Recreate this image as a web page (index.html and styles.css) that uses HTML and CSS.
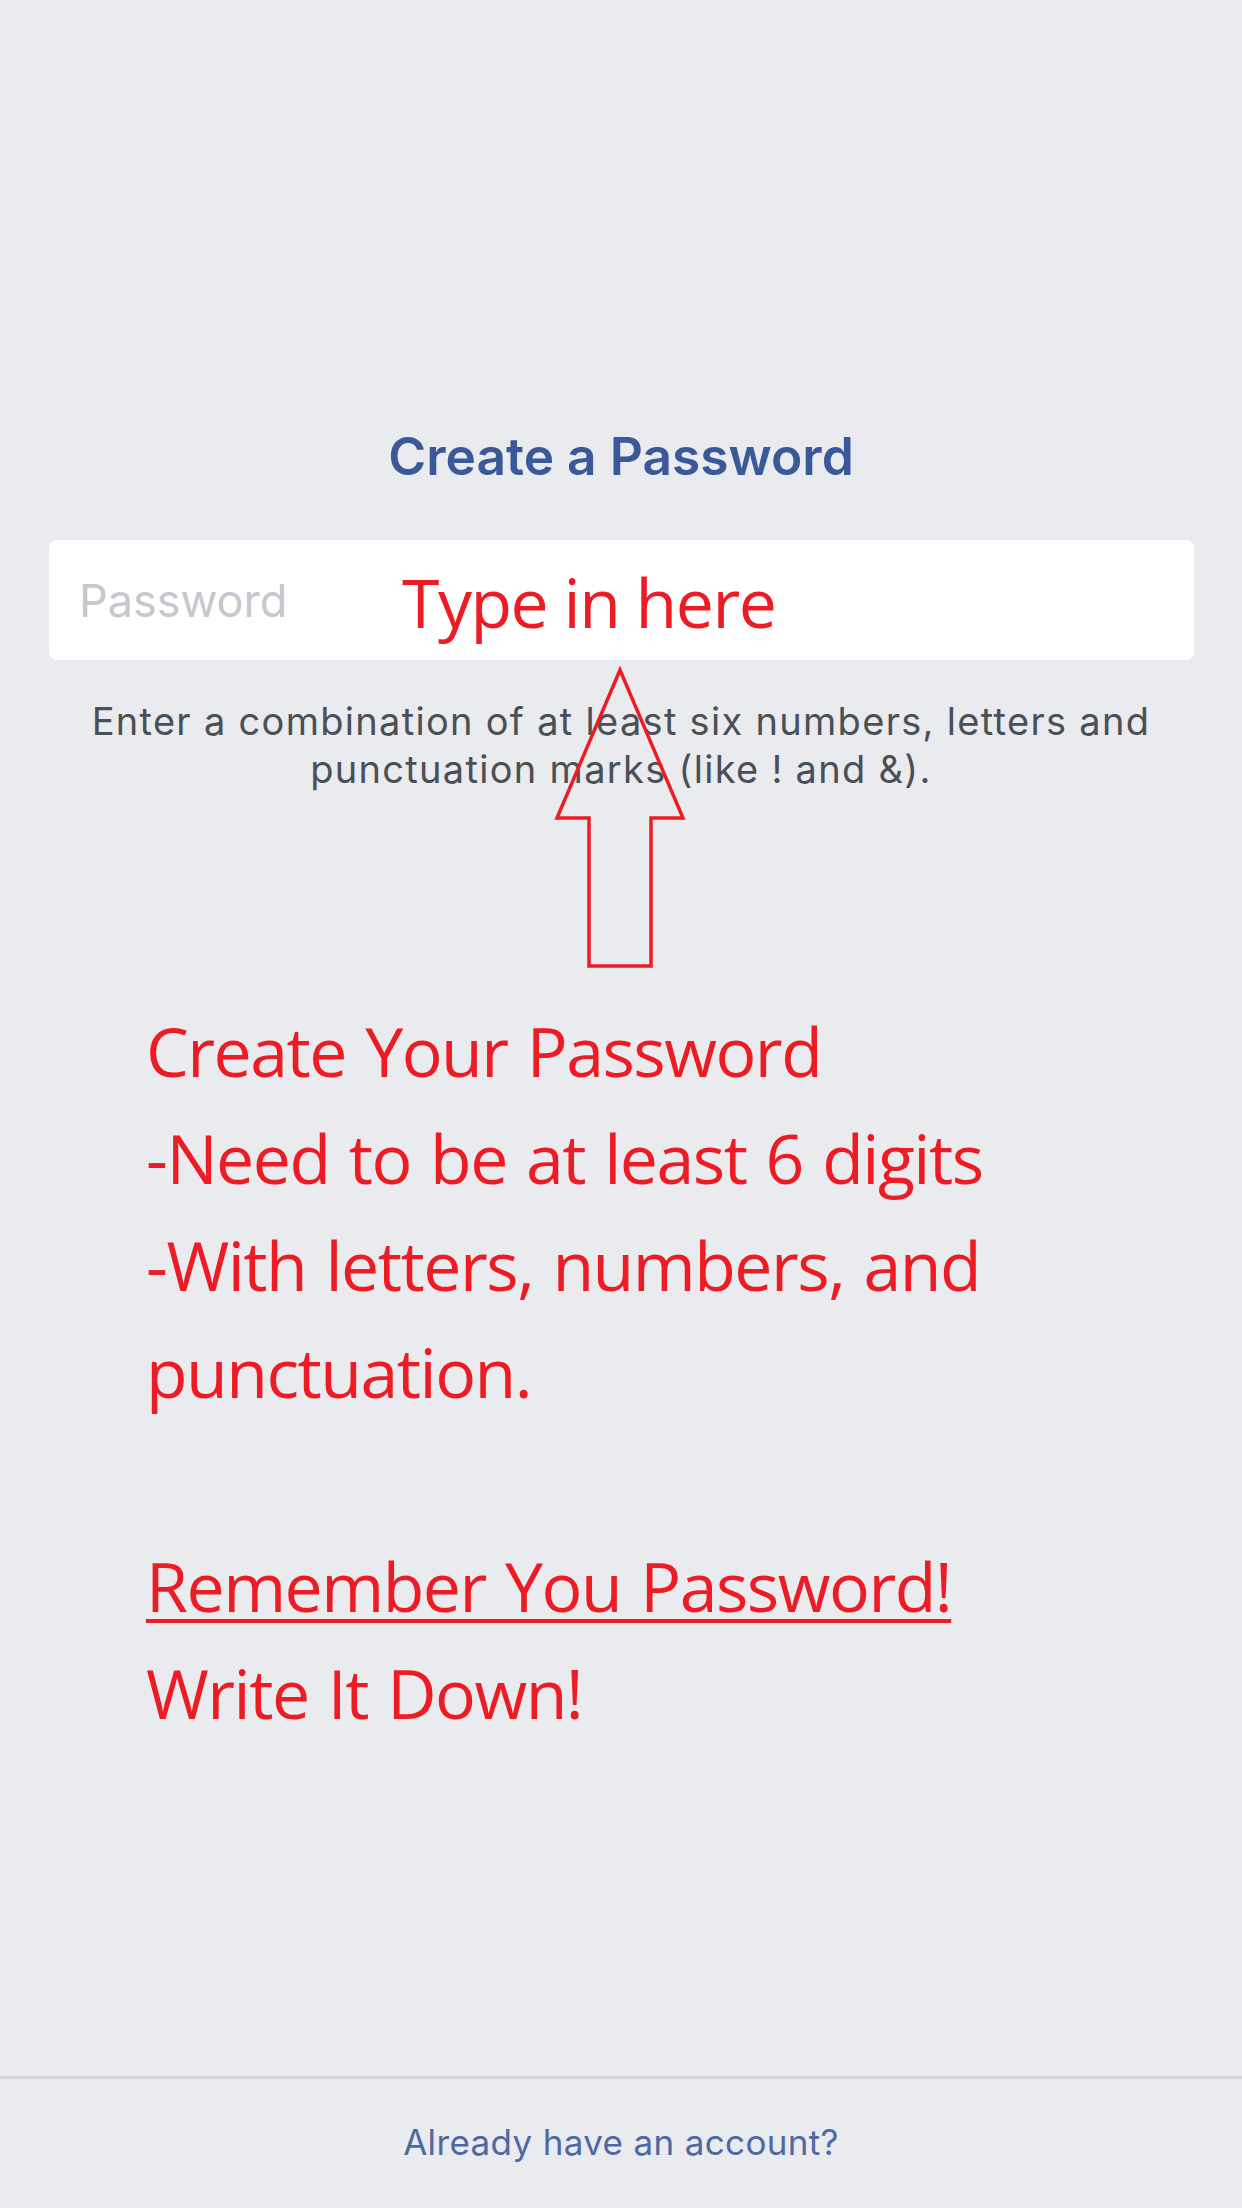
FILE: index.html
```html
<!DOCTYPE html>
<html lang="en">
<head>
<meta charset="utf-8">
<title>Create a Password</title>
<link rel="stylesheet" href="styles.css">
</head>
<body>
<main class="main">
  <h1 class="title">Create a Password</h1>
  <div class="field">
    <span class="placeholder">Password</span>
    <span class="note note-type">Type in here</span>
  </div>
  <p class="help">Enter a combination of at least six numbers, letters and<br>punctuation marks (like ! and &amp;).</p>
  <svg class="arrow" width="1242" height="320" viewBox="0 660 1242 320" aria-hidden="true">
    <polygon points="620,670 557,818 589,818 589,966 651,966 651,818 683,818" fill="none" stroke="#ed1c24" stroke-width="3.5" stroke-linejoin="miter"/>
  </svg>
  <div class="notes">
    <div class="line">Create Your Password</div>
    <div class="line">-Need to be at least 6 digits</div>
    <div class="line">-With letters, numbers, and</div>
    <div class="line">punctuation.</div>
    <div class="line blank"></div>
    <div class="line underline">Remember You Password!</div>
    <div class="line">Write It Down!</div>
  </div>
</main>
<footer class="footer">
  <span class="login">Already have an account?</span>
</footer>
</body>
</html>
```
FILE: styles.css
```css
html, body {
  margin: 0;
  padding: 0;
}
body {
  width: 1242px;
  height: 2208px;
  background: #e9ebee;
  display: flex;
  flex-direction: column;
  font-family: Inter, Roboto, "Liberation Sans", sans-serif;
  overflow: hidden;
}
.main {
  flex: 1;
  position: relative;
  display: flex;
  flex-direction: column;
}
.title {
  margin: 0;
  padding-top: 426px;
  text-align: center;
  font-size: 51.5px;
  line-height: 60px;
  font-weight: 600;
  color: #3b5998;
}
.field {
  position: relative;
  margin: 54px 48px 0 49px;
  height: 120px;
  background: #fff;
  border-radius: 8px;
  display: flex;
  align-items: center;
  padding-left: 30px;
}
.placeholder {
  font-size: 45px;
  color: #c7c7cd;
}
.note {
  font-family: "Open Sans", "Noto Sans", sans-serif;
  color: #ed1c24;
  font-size: 68px;
  line-height: 68px;
  letter-spacing: -1.5px;
}
.note-type {
  position: absolute;
  left: 353px;
  top: 28px;
}
.help {
  margin: 37px 0 0;
  text-align: center;
  font-size: 38px;
  line-height: 48px;
  letter-spacing: 1.3px;
  color: #4b4f56;
}
.arrow {
  position: absolute;
  left: 0;
  top: 660px;
}
.notes {
  margin-top: 204px;
  padding-left: 146px;
  font-family: "Open Sans", "Noto Sans", sans-serif;
  color: #ed1c24;
  font-size: 68px;
  line-height: 107px;
  letter-spacing: -1.5px;
  word-spacing: 3px;
}
.line {
  height: 107px;
  white-space: nowrap;
}
.underline {
  text-decoration: underline;
  text-decoration-thickness: 4px;
  text-underline-offset: 7px;
}
.footer {
  height: 129px;
  border-top: 3px solid #d3d5d9;
  text-align: center;
}
.login {
  display: inline-block;
  margin-top: 42px;
  font-size: 35px;
  line-height: 42px;
  letter-spacing: 0.35px;
  color: #4e69a2;
}
```
